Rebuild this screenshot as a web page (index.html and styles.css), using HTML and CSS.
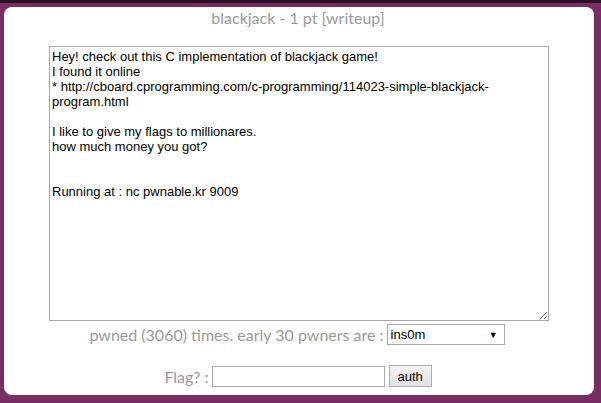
FILE: index.html
```html
<!DOCTYPE html>
<html>
<head>
<meta charset="utf-8">
<link rel="stylesheet" href="styles.css">
</head>
<body>
<div class="frame">
  <div class="panel">
    <div class="title">blackjack - 1 pt [writeup]</div>
    <textarea class="desc">Hey! check out this C implementation of blackjack game!
I found it online
* http://cboard.cprogramming.com/c-programming/114023-simple-blackjack-program.html

I like to give my flags to millionares.
how much money you got?


Running at : nc pwnable.kr 9009</textarea>
    <div class="pwned">
      <span class="label">pwned (3060) times. early 30 pwners are :</span>
      <div class="select"><span>ins0m</span><span class="arrow">&#9660;</span></div>
    </div>
    <div class="flag">
      <span class="label">Flag? :</span>
      <input class="flag-input" type="text">
      <button class="auth">auth</button>
    </div>
  </div>
</div>
</body>
</html>
```
FILE: styles.css
```css
html, body {
  margin: 0;
  padding: 0;
}
body {
  width: 601px;
  height: 403px;
  background: #792e63;
  overflow: hidden;
}
.frame {
  height: 403px;
  border-top: 3px solid #2a1326;
  box-sizing: border-box;
  padding: 4px 7px 8px 4px;
}
.panel {
  background: #fff;
  height: 388px;
  border-radius: 8px;
  display: flex;
  flex-direction: column;
  align-items: center;
}
.title {
  font-family: Lato, sans-serif;
  font-size: 16px;
  line-height: 20px;
  color: #9a9a9a;
  margin-top: 1px;
  margin-left: -2px;
}
.desc {
  box-sizing: border-box;
  width: 500px;
  height: 275px;
  margin: 18px 0 0 0;
  border: 1px solid #a9a9a9;
  padding: 2px;
  font-family: "Liberation Sans", Arial, sans-serif;
  font-size: 13px;
  line-height: 15px;
  color: #000;
  resize: both;
  outline: none;
}
.pwned {
  display: flex;
  align-items: center;
  margin-top: 3px;
  gap: 3px;
  margin-left: -4px;
}
.label {
  font-family: Lato, sans-serif;
  font-size: 16px;
  color: #9a9a9a;
}
.select {
  box-sizing: border-box;
  width: 118px;
  height: 21px;
  border: 1px solid #a9a9a9;
  display: flex;
  align-items: center;
  justify-content: space-between;
  padding: 0 6px 0 3px;
  font-family: "Liberation Sans", Arial, sans-serif;
  font-size: 13px;
  color: #000;
}
.arrow {
  font-size: 9px;
}
.flag {
  display: flex;
  align-items: center;
  margin-top: 20px;
  gap: 3px;
  margin-left: -2px;
}
.flag-input {
  box-sizing: border-box;
  width: 173px;
  height: 21px;
  border: 1px solid #a9a9a9;
  margin: 0;
  padding: 1px 2px;
}
.auth {
  box-sizing: border-box;
  width: 43px;
  height: 22px;
  padding: 0;
  margin: 0 0 0 1px;
  border: 1px solid #adadad;
  background: linear-gradient(#f2f2f2, #e2e2e2);
  font-family: "Liberation Sans", Arial, sans-serif;
  font-size: 13px;
  color: #000;
  border-radius: 0;
}
```
